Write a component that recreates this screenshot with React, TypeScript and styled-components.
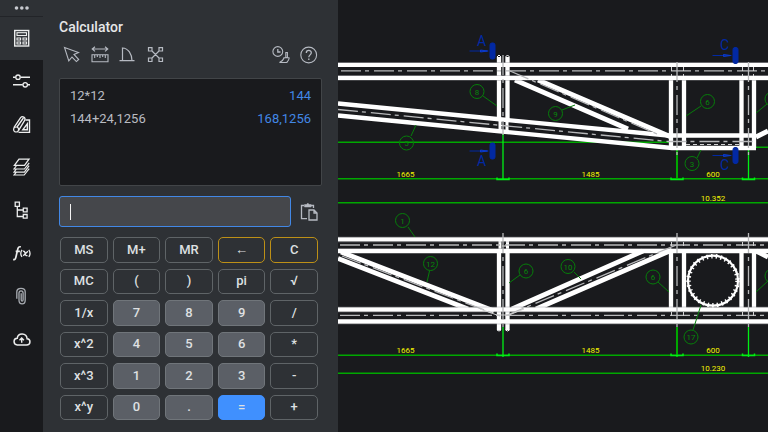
import React from "react";
import styled, { createGlobalStyle } from "styled-components";

const GlobalStyle = createGlobalStyle`
  * { box-sizing: border-box; }
  body {
    margin: 0;
    background: #191a1d;
    font-family: Roboto, "Liberation Sans", sans-serif;
  }
  button, input { font-family: inherit; }
`;

const Page = styled.div`
  display: flex;
  min-height: 100vh;
`;

const Rail = styled.nav`
  flex: none;
  display: flex;
  flex-direction: column;
  width: 43px;
  background: #191a1d;
`;

const RailButton = styled.button<{ $active?: boolean; $short?: boolean }>`
  display: grid;
  place-items: center;
  height: ${(p) => (p.$short ? 17 : 43)}px;
  padding: ${(p) => (p.$short ? 0 : "0 0 2px")};
  border: 0;
  border-bottom: ${(p) => (p.$short ? "1px solid #222428" : "0")};
  background: ${(p) => (p.$active || p.$short ? "#2e3135" : "transparent")};
  color: #eceded;
`;

const Panel = styled.section`
  flex: none;
  display: flex;
  flex-direction: column;
  width: 295px;
  padding: 18px 16px 12px;
  background: #2e3135;
  color: #c8cacd;
`;

const Title = styled.h1`
  margin: 0;
  font-size: 14px;
  font-weight: 500;
  line-height: 18px;
  color: #e6e7e8;
`;

const Toolbar = styled.div`
  display: flex;
  align-items: center;
  gap: 8px;
  height: 38px;
  padding: 0 3px;
`;

const ToolButton = styled.button<{ $push?: boolean }>`
  display: grid;
  place-items: center;
  width: 20px;
  height: 20px;
  margin-left: ${(p) => (p.$push ? "auto" : "0")};
  padding: 0;
  border: 0;
  background: none;
  color: #b6bac2;
`;

const History = styled.ul`
  height: 108px;
  margin: 4px 0 10px;
  padding: 5px 10px;
  border: 1px solid #424548;
  border-radius: 2px;
  background: #191a1d;
  list-style: none;
`;

const HistoryRow = styled.li`
  display: flex;
  justify-content: space-between;
  font-size: 13px;
  line-height: 23px;
  color: #b9bcc2;
`;

const Result = styled.output`
  color: #4288e6;
`;

const Entry = styled.div`
  display: flex;
  align-items: center;
  gap: 8px;
  margin-bottom: 10px;
  padding-right: 3px;
`;

const Field = styled.label`
  flex: 1;
  display: flex;
  align-items: center;
  height: 31px;
  padding: 0 10px;
  border: 1px solid #4288e6;
  border-radius: 3px;
  background: #45474b;
`;

const Caret = styled.span`
  width: 1px;
  height: 16px;
  background: #f4f4f4;
`;

const FieldInput = styled.input`
  flex: 1;
  min-width: 0;
  height: 28px;
  padding: 0;
  border: 0;
  outline: 0;
  background: none;
  color: #e6e7e8;
  font-size: 13px;
`;

const Keypad = styled.div`
  flex: 1;
  display: grid;
  grid-template-columns: repeat(5, 1fr);
  grid-template-rows: repeat(6, minmax(24px, 1fr));
  gap: 6px 5px;
  padding: 0 4px 0 1px;
`;

type Tone = "plain" | "digit" | "edit" | "equals";
const fills: Record<Tone, string> = { plain: "#2e3135", digit: "#5b5f66", edit: "#2e3135", equals: "#4090fe" };
const edges: Record<Tone, string> = { plain: "#5f6467", digit: "#70757a", edit: "#bd9017", equals: "#4090fe" };

const Key = styled.button<{ $tone: Tone }>`
  display: grid;
  place-items: center;
  min-height: 0;
  padding: 0;
  border: 1px solid ${(p) => edges[p.$tone]};
  border-radius: 5px;
  background: ${(p) => fills[p.$tone]};
  color: #dfe0e2;
  font-size: 13px;
  font-weight: 500;
  line-height: 16px;
`;

const Viewport = styled.main`
  flex: 1;
  min-width: 0;
  display: flex;
  background: #191a1d;
`;

const Sheet = styled.svg`
  display: block;
  width: 100%;
  height: 100vh;
`;

const Icon = ({ size = 18, children }: { size?: number; children: React.ReactNode }) => (
  <svg width={size} height={size} viewBox="0 0 18 18" fill="none" stroke="currentColor" strokeWidth="1.1" aria-hidden="true">
    {children}
  </svg>
);

const railItems = [
  { label: "Calculator", art: (
    <>
      <rect x="1.700" y="1.500" width="14" height="15.500" strokeWidth="1.400" />
      <rect x="4" y="3.700" width="9.500" height="2.800" />
      <path d="M4 9h3.600v2H4zM10 9h3.600v2H10zM4 13h3.600v2H4zM10 13h3.600v2H10z" />
    </>
  ) },
  { label: "Settings", art: (
    <>
      <path d="M0 5.200h2.700M7.500 5.200H17M0 12.800h9.800M14.500 12.800H17" strokeWidth="1.400" />
      <circle cx="5" cy="5.200" r="2.200" strokeWidth="1.300" />
      <circle cx="12.200" cy="12.800" r="2.200" strokeWidth="1.300" />
    </>
  ) },
  { label: "Drafting", art: (
    <>
      <path d="M.9 12.600 7.600 2.600a2.500 2.500 0 0 1 4.200 2.600L5.300 15.800M4 12l6.400-9" strokeWidth="1.300" />
      <circle cx="3.100" cy="14.500" r="2.500" strokeWidth="1.200" />
      <path d="M12.500 5h4v12.500H5.500M14.300 8.800v6H9.800z" strokeWidth="1.400" />
    </>
  ) },
  { label: "Layers", art: (
    <>
      <path d="M6 1.200h10L11.500 7.400H1.400z" strokeWidth="1.300" />
      <path d="M3.300 8 1 11h10.400l4.800-6.200M3.200 11.200 1 14.200h10.400l4.700-6.500M3.200 14.300 1 17h10.200l5-6.300" strokeWidth="1.200" />
    </>
  ) },
  { label: "Tree", art: (
    <path d="M2.200 1.200h4.200v4.200H2.200zM4.300 5.400v10.100h5.800M4.300 9h5.800M10.300 7.100h3.800v3.800h-3.800zM10.300 13.500h3.800v3.700h-3.800z" strokeWidth="1.300" />
  ) },
  { label: "Functions", art: (
    <>
      <path d="M.2 15.400c1.900.7 2.400-.9 2.800-2.700L4.800 5c.4-1.800 1.300-2.600 3-2.100M2.700 7.300h4.200" strokeWidth="1.700" />
      <path d="M9 5.900c-1.500 2.200-1.500 4.900 0 7M15.800 5.900c1.500 2.200 1.500 4.900 0 7M9.900 7.400c1.500-.7 1.800.3 2.200 1.900.4 1.800.9 2.900 2.400 2.200M14.900 7.300l-4.700 4.500" strokeWidth="1.300" />
    </>
  ) },
  { label: "Attachments", art: (
    <path d="M3.800 11.700V4.800c0-4.700 8.400-4.700 8.400 0v8.400c0 4.800-6.200 4.800-6.200 0V6.100c0-3 4.100-3 4.100 0v6.700c0 1.700-1.900 1.700-1.900 0V6.300" stroke="#a8acb2" strokeWidth="1.300" />
  ) },
  { label: "Upload", art: (
    <>
      <path d="M4.300 15h9.200c4.400 0 4.600-6 .6-6.300C13.500 2.600 5 2.500 4.200 8.300 0 8.500 0 14.700 4.300 15z" strokeWidth="1.500" />
      <path d="M8.700 12.700V8.500M6.500 10.300l2.200-2.200 2.200 2.200" strokeWidth="1.400" />
    </>
  ) },
];

const tools = [
  { label: "Select", art: <path d="M1.500 1.500 15.500 6.500 11 8.500 15.700 13.500 13.400 15.600 9 11 5.800 14.800z" /> },
  { label: "Measure length", art: (
    <path d="M1 3h16M4 .7 1.2 3 4 5.300M14 .7 16.800 3 14 5.300M1 8.700h16v7H1zM3.700 9v3M6.300 9v2M9 9v3M11.700 9v2M14.300 9v3" />
  ) },
  { label: "Measure angle", art: <path d="M.5 14.700h15M3.500 14.700V2c5.900.3 9.300 5.900 9.500 12.700" strokeWidth="1.200" /> },
  { label: "Points", art: (
    <path d="M1.500 1.700H5V5H1.500zM12 1.700h3.500V5H12zM1.500 12H5v3.500H1.500zM12 12h3.500v3.500H12zM5 5l7 7M12 5l-7 7" strokeWidth="1.200" />
  ) },
];

const history = [
  ["12*12", "144"],
  ["144+24,1256", "168,1256"],
];

const keys = [
  "MS", "M+", "MR", "←", "C",
  "MC", "(", ")", "pi", "√",
  "1/x", "7", "8", "9", "/",
  "x^2", "4", "5", "6", "*",
  "x^3", "1", "2", "3", "-",
  "x^y", "0", ".", "=", "+",
];

const toneOf = (key: string): Tone => {
  if (/^[0-9.]$/.test(key)) return "digit";
  if (key === "=") return "equals";
  return key === "←" || key === "C" ? "edit" : "plain";
};

const callouts: [number, number, string, string][] = [
  [477, 91.5, "8", "M483 96L497 106"],
  [406.5, 143, "5", "M411 136L416 125"],
  [555.5, 113.5, "9", "M562 110L575 105"],
  [707.5, 101.5, "6", "M701 106L686 116"],
  [692, 163.5, "3", "M697 158L701 150"],
  [772, 99, "", "M767 104L756 113"],
  [402.5, 220.5, "1", "M408 227L415 237"],
  [430.5, 263.5, "12", "M429.500 271L427 282"],
  [526, 271, "6", "M520 275L509 283"],
  [568, 266.5, "10", "M574 272L581 279"],
  [653, 277, "6", "M658 282L669 292"],
  [691, 337, "17", "M693 330L701 305"],
  [772, 276, "", "M768 281L756 292"],
];

const dimensions: [number, number, string][] = [
  [405.5, 177, "1665"], [590.5, 177, "1485"], [713, 177, "600"], [713, 201, "10.352"],
  [405.5, 353, "1665"], [590.5, 353, "1485"], [713, 353, "600"], [713, 371, "10.230"],
];

const sections: [number, number, number, string][] = [
  [492.5, 51, 46, "A"], [492.5, 151, 166, "A"], [735.5, 55.5, 50, "C"], [735.5, 155.5, 170, "C"],
];

const Drawing = () => (
  <Sheet viewBox="338 0 430 432" preserveAspectRatio="xMinYMin slice" role="img" aria-label="Truss drawing">
    <g stroke="#00a800" strokeWidth="1.5">
      <path d="M338 142.300H670M756 147.300H768M338 178.700H768M338 202.700H768M338 355.300H768M338 373.300H768" />
      <path d="M677 150V180M677 327V357" strokeWidth="2" />
    </g>
    <path d="M503 133V180M748.500 150V180M503 327V357M748.500 327V357" stroke="#00ee14" strokeWidth="1.3" />
    {[179.5, 355.5].map((y) => [503, 677, 748.5].map((x) => (
      <path key={`${x}-${y}`} d={`M${x - 6} ${y - 2}V${y}H${x - 2}M${x + 6} ${y - 2}V${y}H${x + 2}M${x - 4} ${y}H${x + 4}`} fill="none" stroke="#00ee14" strokeWidth="1.5" />
    )))}

    <g stroke="#fff" strokeWidth="4.3" fill="none">
      <path d="M338 64.800H768M338 77.800H768M338 239.300H768M338 251H768M338 309.500H768M338 321.500H768" />
      <path d="M338 103.500L497 119L668 135.500H756M338 115.500L497 131L672 148H756" />
      <path d="M671 78V148M684 78V148M741.500 78V148M754 78V148M671 251V309M684 251V309M741.500 251V309M754 251V309" />
      <path d="M499 57V119M507.500 57V119M499 251V330M507.500 251V330" />
      <path d="M538 80L670 136.500M515 80L628 129M756 137L768 131" strokeWidth="4.8" />
      <path d="M341 252L494 311M338 258.500L468 309M512 309L643 251M536 309L672 250M756 251L768 257" strokeWidth="4.8" />
    </g>
    <g fill="none" stroke="#fff">
      <path d="M500 119V132M507 119V131M500 241V251M507.500 241V250" strokeWidth="3" />
      <path d="M501 125.500H508M502 246H506" />
      <path d="M497 57l2-2 2 2M505.500 57l2-2 2 2M497 330l2 1 2-1M505.500 330l2 1 2-1" />
    </g>
    <g stroke="#8b8c90" opacity=".6">
      <path d="M338 62.500H768M338 75.500H768M338 80.500H768M338 237H768M338 242H768M338 248.500H768M338 307H768M338 312H768M338 324H768" strokeWidth=".6" />
    </g>
    <g stroke="#b8b9bb" strokeWidth="1.3" strokeDasharray="20 4 4 5" fill="none">
      <path d="M341 70.800H768M340 245H768M340 315.400H768" />
      <path d="M338 109.500L497 125L668 141.500H756M510 71L657 134M342 256L500 316M505 316L676 245" />
      <path d="M503 55V135M677 62V155M748.500 62V155M503 233V330M677 233V330M748.500 233V330" />
    </g>
    <g stroke="#d2d2d3" strokeDasharray="4 3">
      <path d="M671.500 67V76M683.500 67V76M742.500 67V76M753.500 67V76M671.500 242V249M683.500 242V249M742.500 242V249M753.500 242V249M671.500 312V319M683.500 312V319M742.500 312V319M753.500 312V319" />
      <path d="M686 144.500H740" />
    </g>
    <path d="M480 309L497 315H509L524 309" fill="none" stroke="#d2d2d3" />
    <circle cx="713" cy="280.700" r="25" fill="none" stroke="#fff" strokeWidth="2.200" />
    <circle cx="713" cy="280.700" r="24.500" fill="none" stroke="#fff" strokeWidth="4.500" strokeDasharray="1.500 3.200" />

    {callouts.map(([x, y, label, leader]) => (
      <g key={`${x}-${y}`}>
        <path d={leader} stroke="#067d0a" />
        <circle cx={x} cy={y} r="7" fill="none" stroke="#067d0a" />
        {label && (
          <text x={x} y={y + 3} fill="#06870a" textAnchor="middle" fontFamily="Roboto, 'Liberation Sans', sans-serif" fontSize="8">{label}</text>
        )}
      </g>
    ))}
    {dimensions.map(([x, y, label]) => (
      <text key={`${x}-${y}`} x={x} y={y} fill="#f4f400" textAnchor="middle" fontFamily="Roboto, 'Liberation Sans', sans-serif" fontSize="8">{label}</text>
    ))}
    {sections.map(([x, y, base, label]) => (
      <g key={`${x}-${y}`} fill="#0229a3" stroke="#0229a3">
        <rect x={x - 2.5} y={y - 8} width="5" height="16" rx="2" />
        <path d={`M${x - 23} ${y}H${x - 4}`} />
        <path d={`M${x - 12} ${y - 1}L${x - 5} ${y}L${x - 12} ${y + 1}Z`} stroke="#0c3bcb" />
        <text x={x - 11} y={base} stroke="none" textAnchor="middle" fontFamily="Roboto, 'Liberation Sans', sans-serif" fontSize="14">{label}</text>
      </g>
    ))}
  </Sheet>
);

export default function App() {
  return (
    <>
      <GlobalStyle />
      <Page>
        <Rail aria-label="Tools">
          <RailButton $short aria-label="More">
            <svg width="16" height="6" viewBox="0 0 16 6" fill="#c8cad0" aria-hidden="true">
              <circle cx="2.500" cy="3" r="1.800" /><circle cx="7.800" cy="3" r="1.800" /><circle cx="13" cy="3" r="1.800" />
            </svg>
          </RailButton>
          {railItems.map((item, i) => (
            <RailButton key={item.label} $active={i === 0} aria-label={item.label}>
              <Icon>{item.art}</Icon>
            </RailButton>
          ))}
        </Rail>
        <Panel>
          <Title>Calculator</Title>
          <Toolbar>
            {tools.map((tool) => (
              <ToolButton key={tool.label} aria-label={tool.label}><Icon>{tool.art}</Icon></ToolButton>
            ))}
            <ToolButton $push aria-label="Clear history">
              <Icon>
                <circle cx="5.800" cy="5.500" r="4.900" />
                <path d="M5.800 3v3h2.700" strokeWidth="1.300" />
                <path d="M13.800 6.500h1.600v5h-1.600zM11.500 11.700h6M12 12c-.6 2-2.500 3.600-4.500 4.500h7.300c1.400-1.400 2.200-2.800 2.400-4.500" />
              </Icon>
            </ToolButton>
            <ToolButton aria-label="Help">
              <Icon>
                <circle cx="8.700" cy="9" r="7.900" />
                <path d="M6.300 7c0-3.400 5-3.400 5-.2 0 2-2.500 2.200-2.500 4.400M8.800 12.500v1.500" strokeWidth="1.300" />
              </Icon>
            </ToolButton>
          </Toolbar>
          <History>
            {history.map(([expression, result]) => (
              <HistoryRow key={expression}><span>{expression}</span><Result>{result}</Result></HistoryRow>
            ))}
          </History>
          <Entry>
            <Field><Caret /><FieldInput aria-label="Expression" /></Field>
            <ToolButton aria-label="Paste">
              <Icon>
                <path d="M4 2.500H1.500v13.200H7M11 2.500h2.500V5" strokeWidth="1.300" />
                <path d="M4.500 1.500h2l.8-1h1l.8 1h2v2.500H4.500z" fill="currentColor" strokeWidth=".5" />
                <path d="M9 7h5l3 3v7H9zM14 7v3h3" strokeWidth="1.300" />
              </Icon>
            </ToolButton>
          </Entry>
          <Keypad>
            {keys.map((key) => <Key key={key} $tone={toneOf(key)}>{key}</Key>)}
          </Keypad>
        </Panel>
        <Viewport><Drawing /></Viewport>
      </Page>
    </>
  );
}
